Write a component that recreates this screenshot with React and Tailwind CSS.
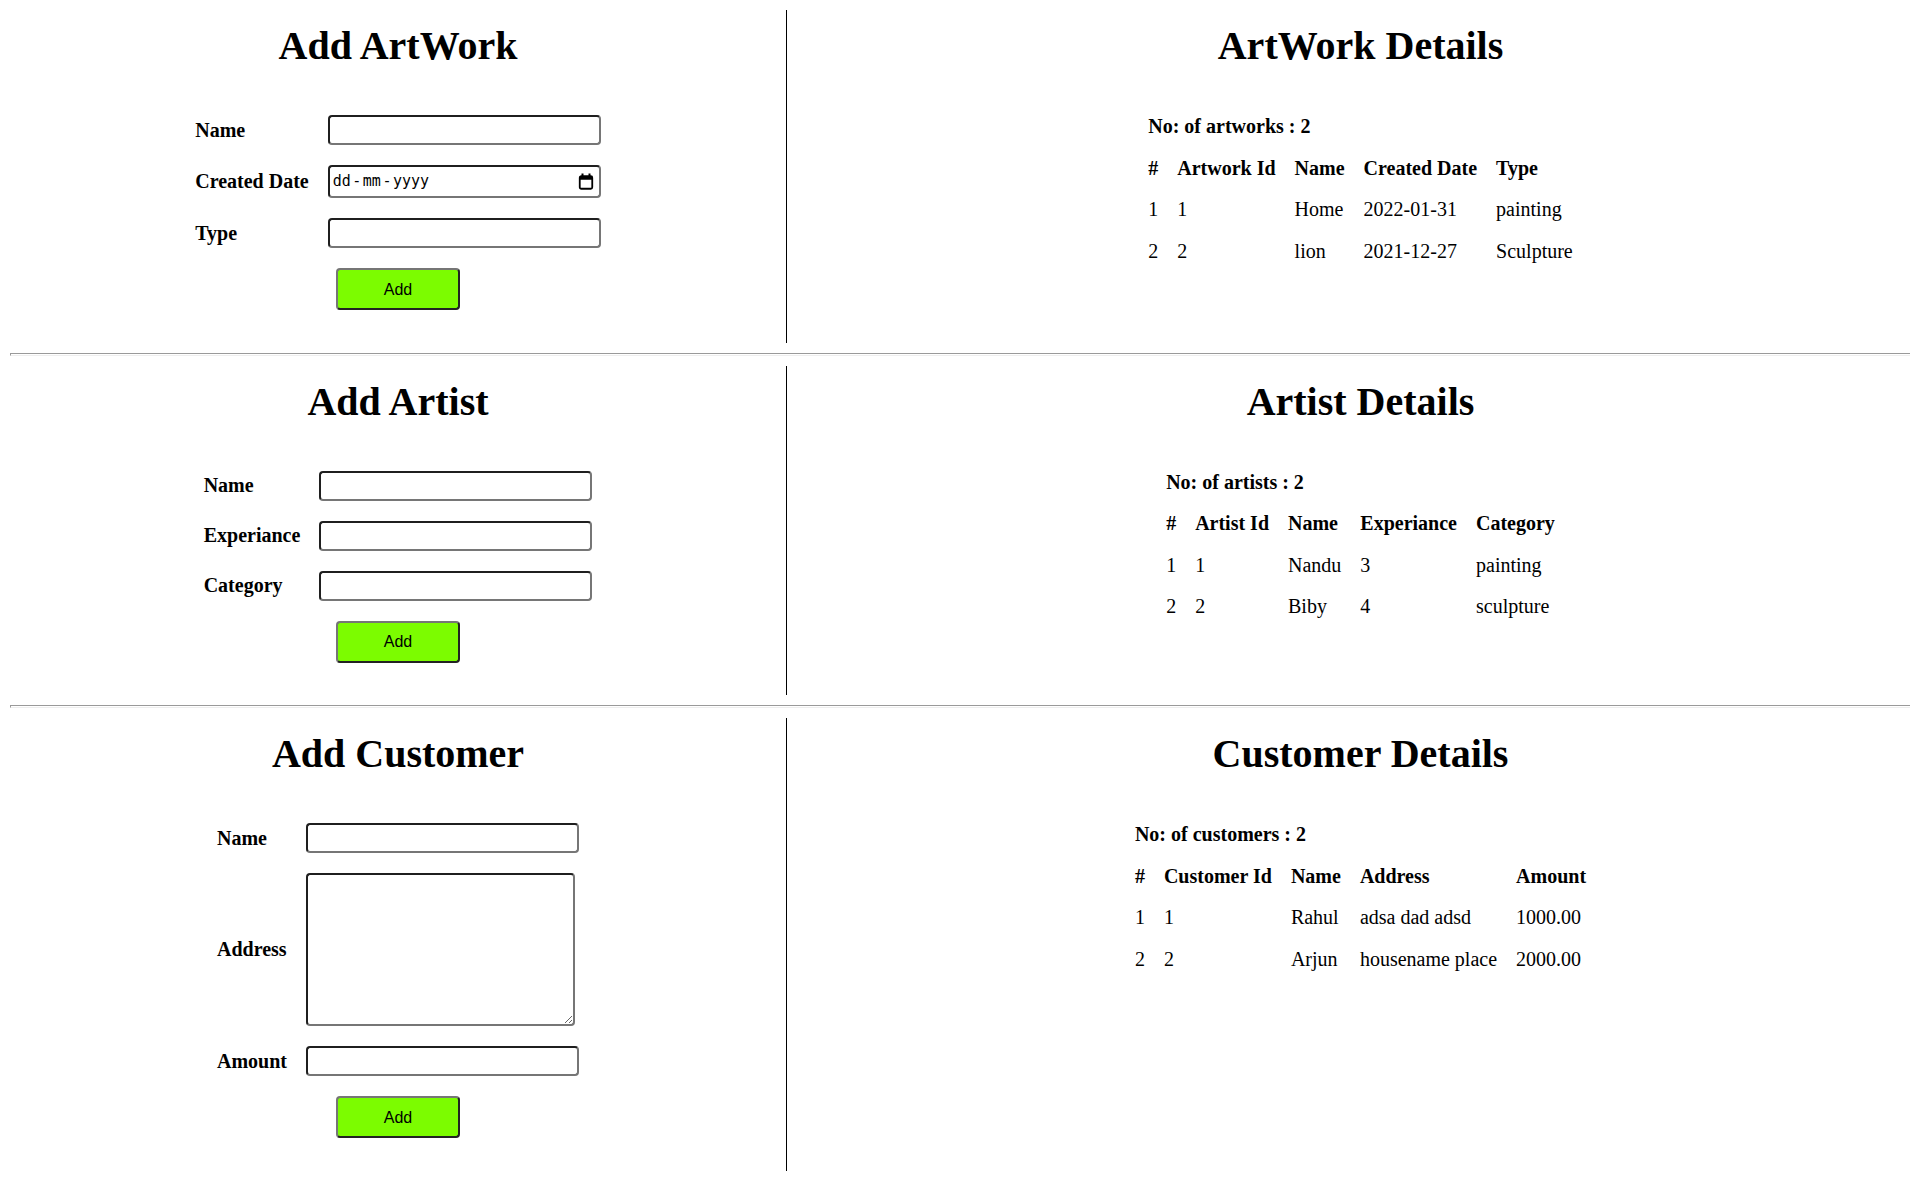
import React from 'react';

const artworks = [
  ['1', '1', 'Home', '2022-01-31', 'painting'],
  ['2', '2', 'lion', '2021-12-27', 'Sculpture'],
];

const artists = [
  ['1', '1', 'Nandu', '3', 'painting'],
  ['2', '2', 'Biby', '4', 'sculpture'],
];

const customers = [
  ['1', '1', 'Rahul', 'adsa dad adsd', '1000.00'],
  ['2', '2', 'Arjun', 'housename place', '2000.00'],
];

const inputCls =
  'block w-[273px] h-[30px] rounded-[4px] border-2 border-t-[#1f1f1f] border-l-[#1f1f1f] border-r-[#767676] border-b-[#767676] bg-white px-[3px] outline-none';

function CalendarIcon() {
  return (
    <svg width="16" height="17" viewBox="0 0 16 17" className="shrink-0">
      <rect x="1.75" y="3.25" width="12.5" height="12.5" rx="1.5" fill="none" stroke="#000" strokeWidth="1.8" />
      <rect x="1.75" y="3.25" width="12.5" height="3.5" fill="#000" />
      <rect x="3.5" y="0.5" width="2" height="3" fill="#000" />
      <rect x="10.5" y="0.5" width="2" height="3" fill="#000" />
    </svg>
  );
}

function DateField() {
  return (
    <div className="flex items-center justify-between w-[273px] h-[33px] rounded-[4px] border-2 border-t-[#1f1f1f] border-l-[#1f1f1f] border-r-[#767676] border-b-[#767676] bg-white pl-[3px] pr-[5px]">
      <span className="font-['DejaVu_Sans_Mono',monospace] text-[15px] leading-none">
        dd<span className="mx-[1.5px]">-</span>mm<span className="mx-[1.5px]">-</span>yyyy
      </span>
      <CalendarIcon />
    </div>
  );
}

function Field({ label, children }) {
  return (
    <tr>
      <td className="px-[9.5px] py-[10px] align-middle text-left font-bold">{label}</td>
      <td className="px-[9.5px] py-[10px] align-middle">{children}</td>
    </tr>
  );
}

function AddButton() {
  return (
    <tr>
      <td colSpan={2} className="px-[9.5px] py-[10px]">
        <button className="block mx-auto w-[124px] h-[42px] rounded-[4px] border-2 border-t-[#767676] border-l-[#767676] border-r-[#222] border-b-[#222] bg-[#7cfc00] font-['Liberation_Sans',Arial,sans-serif] text-[16px] text-black">
          Add
        </button>
      </td>
    </tr>
  );
}

function Details({ title, countLabel, headers, rows }) {
  return (
    <div className="flex-1 flex flex-col items-center pl-[24px]">
      <h1 className="mt-[13px] text-[40px] leading-[46px] font-bold">{title}</h1>
      <table className="mt-[37px]">
        <tbody>
          <tr>
            <td colSpan={5} className="px-[9.5px] py-[9.25px] text-left font-bold">
              {countLabel}
            </td>
          </tr>
          <tr>
            {headers.map((h) => (
              <th key={h} className="px-[9.5px] py-[9.25px] text-left font-bold">
                {h}
              </th>
            ))}
          </tr>
          {rows.map((r) => (
            <tr key={r[0]}>
              {r.map((c, i) => (
                <td key={i} className="px-[9.5px] py-[9.25px] text-left">
                  {c}
                </td>
              ))}
            </tr>
          ))}
        </tbody>
      </table>
    </div>
  );
}

function Section({ title, fields, details }) {
  return (
    <div className="flex">
      <div className="w-[777px] shrink-0 border-r border-black flex flex-col items-center pb-[22.5px]">
        <h1 className="mt-[13px] text-[40px] leading-[46px] font-bold">{title}</h1>
        <table className="mt-[36px]">
          <tbody>
            {fields}
            <AddButton />
          </tbody>
        </table>
      </div>
      <Details {...details} />
    </div>
  );
}

function Rule() {
  return <div className="my-[10px] h-[3px] border-t border-l border-t-[#9a9a9a] border-l-[#9a9a9a] border-b border-b-[#eeeeee]" />;
}

export default function App() {
  return (
    <div className="min-h-screen bg-white p-[10px] font-['Liberation_Serif','Times_New_Roman',serif] text-[20px] leading-[23px] text-black">
      <Section
        title="Add ArtWork"
        fields={
          <>
            <Field label="Name">
              <input type="text" className={inputCls} />
            </Field>
            <Field label="Created Date">
              <DateField />
            </Field>
            <Field label="Type">
              <input type="text" className={inputCls} />
            </Field>
          </>
        }
        details={{
          title: 'ArtWork Details',
          countLabel: 'No: of artworks : 2',
          headers: ['#', 'Artwork Id', 'Name', 'Created Date', 'Type'],
          rows: artworks,
        }}
      />
      <Rule />
      <Section
        title="Add Artist"
        fields={
          <>
            <Field label="Name">
              <input type="text" className={inputCls} />
            </Field>
            <Field label="Experiance">
              <input type="text" className={inputCls} />
            </Field>
            <Field label="Category">
              <input type="text" className={inputCls} />
            </Field>
          </>
        }
        details={{
          title: 'Artist Details',
          countLabel: 'No: of artists : 2',
          headers: ['#', 'Artist Id', 'Name', 'Experiance', 'Category'],
          rows: artists,
        }}
      />
      <Rule />
      <Section
        title="Add Customer"
        fields={
          <>
            <Field label="Name">
              <input type="text" className={inputCls} />
            </Field>
            <Field label="Address">
              <textarea className="block w-[269px] h-[153px] rounded-[4px] border-2 border-t-[#1f1f1f] border-l-[#1f1f1f] border-r-[#767676] border-b-[#767676] bg-white outline-none resize" />
            </Field>
            <Field label="Amount">
              <input type="text" className={inputCls} />
            </Field>
          </>
        }
        details={{
          title: 'Customer Details',
          countLabel: 'No: of customers : 2',
          headers: ['#', 'Customer Id', 'Name', 'Address', 'Amount'],
          rows: customers,
        }}
      />
    </div>
  );
}
